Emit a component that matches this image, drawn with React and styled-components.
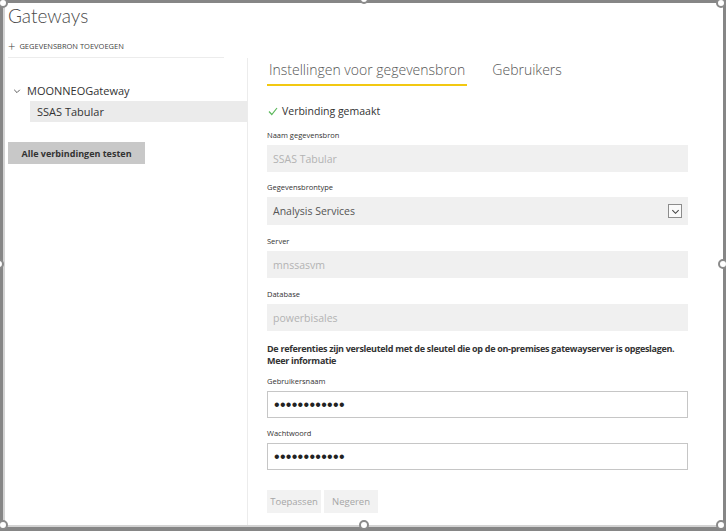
import React from "react";
import styled, { createGlobalStyle } from "styled-components";

const GlobalStyle = createGlobalStyle`
  html, body {
    margin: 0;
    padding: 0;
    background: #fff;
  }
  body {
    font-family: "Open Sans", "Noto Sans", "Liberation Sans", sans-serif;
    color: #333;
  }
  * {
    box-sizing: border-box;
  }
`;

const Frame = styled.div`
  position: relative;
  width: 726px;
  height: 531px;
  border-style: solid;
  border-color: #868686;
  border-width: 3px 3px 4px 3px;
  background: #fff;
`;

const Inner = styled.div`
  display: flex;
  flex-direction: column;
  height: 100%;
  border-left: 2px solid #d3d3d3;
  border-bottom: 2px solid #d3d3d3;
  overflow: hidden;
`;

const Header = styled.div`
  padding-left: 3px;
`;

const Title = styled.h1`
  margin: 0;
  font-family: "Lato", "Open Sans", sans-serif;
  font-size: 19px;
  font-weight: 300;
  line-height: 26px;
  color: #4a4a4a;
`;

const AddRow = styled.div`
  display: flex;
  align-items: center;
  gap: 4px;
  width: 216px;
  height: 29px;
  padding-top: 6px;
  border-bottom: 1px solid #ececec;
  font-size: 7.5px;
  text-transform: uppercase;
  color: #444;
`;

const Plus = styled.span`
  font-size: 13px;
  font-weight: 300;
  line-height: 1;
`;

const Body = styled.div`
  flex: 1;
  display: flex;
`;

const Sidebar = styled.div`
  width: 243px;
  flex-shrink: 0;
  border-right: 1px solid #ececec;
  padding-top: 22px;
`;

const TreeRow = styled.div`
  display: flex;
  align-items: center;
  height: 21px;
  padding-left: ${(p) => p.$indent}px;
  gap: 6px;
  font-size: 11px;
  color: #333;
  background: ${(p) => (p.$selected ? "#ebebeb" : "transparent")};
  margin-left: ${(p) => (p.$selected ? 25 : 0)}px;
`;

const TestButton = styled.button`
  margin: 20px 0 0 3px;
  width: 137px;
  height: 22px;
  border: none;
  background: #c8c8c8;
  font-family: inherit;
  font-size: 9px;
  font-weight: 700;
  color: #333;
  padding: 0;
`;

const Main = styled.div`
  flex: 1;
  min-width: 0;
  padding: 2px 35px 0 19px;
  display: flex;
  flex-direction: column;
`;

const Tabs = styled.div`
  display: flex;
  gap: 23px;
`;

const Tab = styled.div`
  padding: 0 2px 4px;
  font-size: 14px;
  font-weight: 300;
  line-height: 20px;
  color: #555;
  border-bottom: 2px solid ${(p) => (p.$active ? "#f2c811" : "transparent")};
`;

const Status = styled.div`
  display: flex;
  align-items: center;
  gap: 4px;
  margin-top: 17px;
  padding-left: 1px;
  height: 16px;
  font-size: 10.5px;
  color: #333;
`;

const Field = styled.div`
  margin-top: ${(p) => p.$top}px;
`;

const Label = styled.div`
  font-size: 7.5px;
  line-height: 12px;
  color: #333;
`;

const Box = styled.div`
  display: flex;
  align-items: center;
  justify-content: space-between;
  margin-top: 4px;
  height: ${(p) => (p.$tall ? 28 : 27)}px;
  padding: 0 6px;
  font-size: 10.5px;
  color: ${(p) => (p.$muted ? "#b3b3b3" : "#555")};
  background: ${(p) => (p.$editable ? "#fff" : "#f0f0f0")};
  border: ${(p) => (p.$editable ? "1px solid #c6c6c6" : "none")};
`;

const Dots = styled.span`
  font-family: "Liberation Sans", sans-serif;
  font-size: 16px;
  line-height: 1;
  letter-spacing: 0.3px;
  color: #222;
`;

const Caret = styled.span`
  display: flex;
  align-items: center;
  justify-content: center;
  width: 14px;
  height: 14px;
  border: 1px solid #8c8c8c;
  background: #fafafa;
`;

const Note = styled.div`
  margin-top: 12px;
  font-size: 9px;
  font-weight: 700;
  line-height: 11.5px;
  letter-spacing: -0.3px;
  white-space: nowrap;
  color: #333;
`;

const Actions = styled.div`
  display: flex;
  gap: 3px;
  margin-top: 20px;
`;

const ActionButton = styled.button`
  width: 54px;
  height: 23px;
  padding: 0;
  border: none;
  background: #f2f2f2;
  font-family: inherit;
  font-size: 9.5px;
  color: #a6a6a6;
`;

const Handle = styled.span`
  position: absolute;
  width: 10px;
  height: 10px;
  border-radius: 50%;
  border: 2px solid #8a8a8a;
  background: #fff;
  left: ${(p) => p.$x}px;
  top: ${(p) => p.$y}px;
`;

const handles = [
  [-5, -5], [356, -9], [713, -5],
  [-9, 256], [715, 256],
  [-5, 517], [356, 517], [713, 517],
];

function Chevron({ size = 8, color = "#555" }) {
  return (
    <svg width={size} height={size} viewBox="0 0 10 10">
      <path d="M1.5 3.5 L5 7 L8.5 3.5" fill="none" stroke={color} strokeWidth="1.2" />
    </svg>
  );
}

function FormField({ label, top, children }) {
  return (
    <Field $top={top}>
      <Label>{label}</Label>
      {children}
    </Field>
  );
}

export default function App() {
  return (
    <>
      <GlobalStyle />
      <Frame>
        <Inner>
          <Header>
            <Title>Gateways</Title>
            <AddRow>
              <Plus>+</Plus>
              <span>Gegevensbron toevoegen</span>
            </AddRow>
          </Header>
          <Body>
            <Sidebar>
              <TreeRow $indent={8}>
                <Chevron />
                <span>MOONNEOGateway</span>
              </TreeRow>
              <TreeRow $indent={7} $selected>
                SSAS Tabular
              </TreeRow>
              <TestButton>Alle verbindingen testen</TestButton>
            </Sidebar>
            <Main>
              <Tabs>
                <Tab $active>Instellingen voor gegevensbron</Tab>
                <Tab>Gebruikers</Tab>
              </Tabs>
              <Status>
                <svg width="10" height="9" viewBox="0 0 10 9">
                  <path d="M1 4.5 L3.8 7.5 L9 1" fill="none" stroke="#5cb85c" strokeWidth="1.2" />
                </svg>
                Verbinding gemaakt
              </Status>
              <FormField label="Naam gegevensbron" top={10}>
                <Box $muted>SSAS Tabular</Box>
              </FormField>
              <FormField label="Gegevensbrontype" top={9}>
                <Box $tall>
                  Analysis Services
                  <Caret>
                    <Chevron size={9} color="#444" />
                  </Caret>
                </Box>
              </FormField>
              <FormField label="Server" top={10}>
                <Box $muted>mnssasvm</Box>
              </FormField>
              <FormField label="Database" top={10}>
                <Box $muted>powerbisales</Box>
              </FormField>
              <Note>
                De referenties zijn versleuteld met de sleutel die op de on-premises gatewayserver is opgeslagen.
                <br />
                Meer informatie
              </Note>
              <FormField label="Gebruikersnaam" top={9}>
                <Box $editable>
                  <Dots>••••••••••••</Dots>
                </Box>
              </FormField>
              <FormField label="Wachtwoord" top={9}>
                <Box $editable>
                  <Dots>••••••••••••</Dots>
                </Box>
              </FormField>
              <Actions>
                <ActionButton>Toepassen</ActionButton>
                <ActionButton>Negeren</ActionButton>
              </Actions>
            </Main>
          </Body>
        </Inner>
        {handles.map(([x, y], i) => (
          <Handle key={i} $x={x} $y={y} />
        ))}
      </Frame>
    </>
  );
}
